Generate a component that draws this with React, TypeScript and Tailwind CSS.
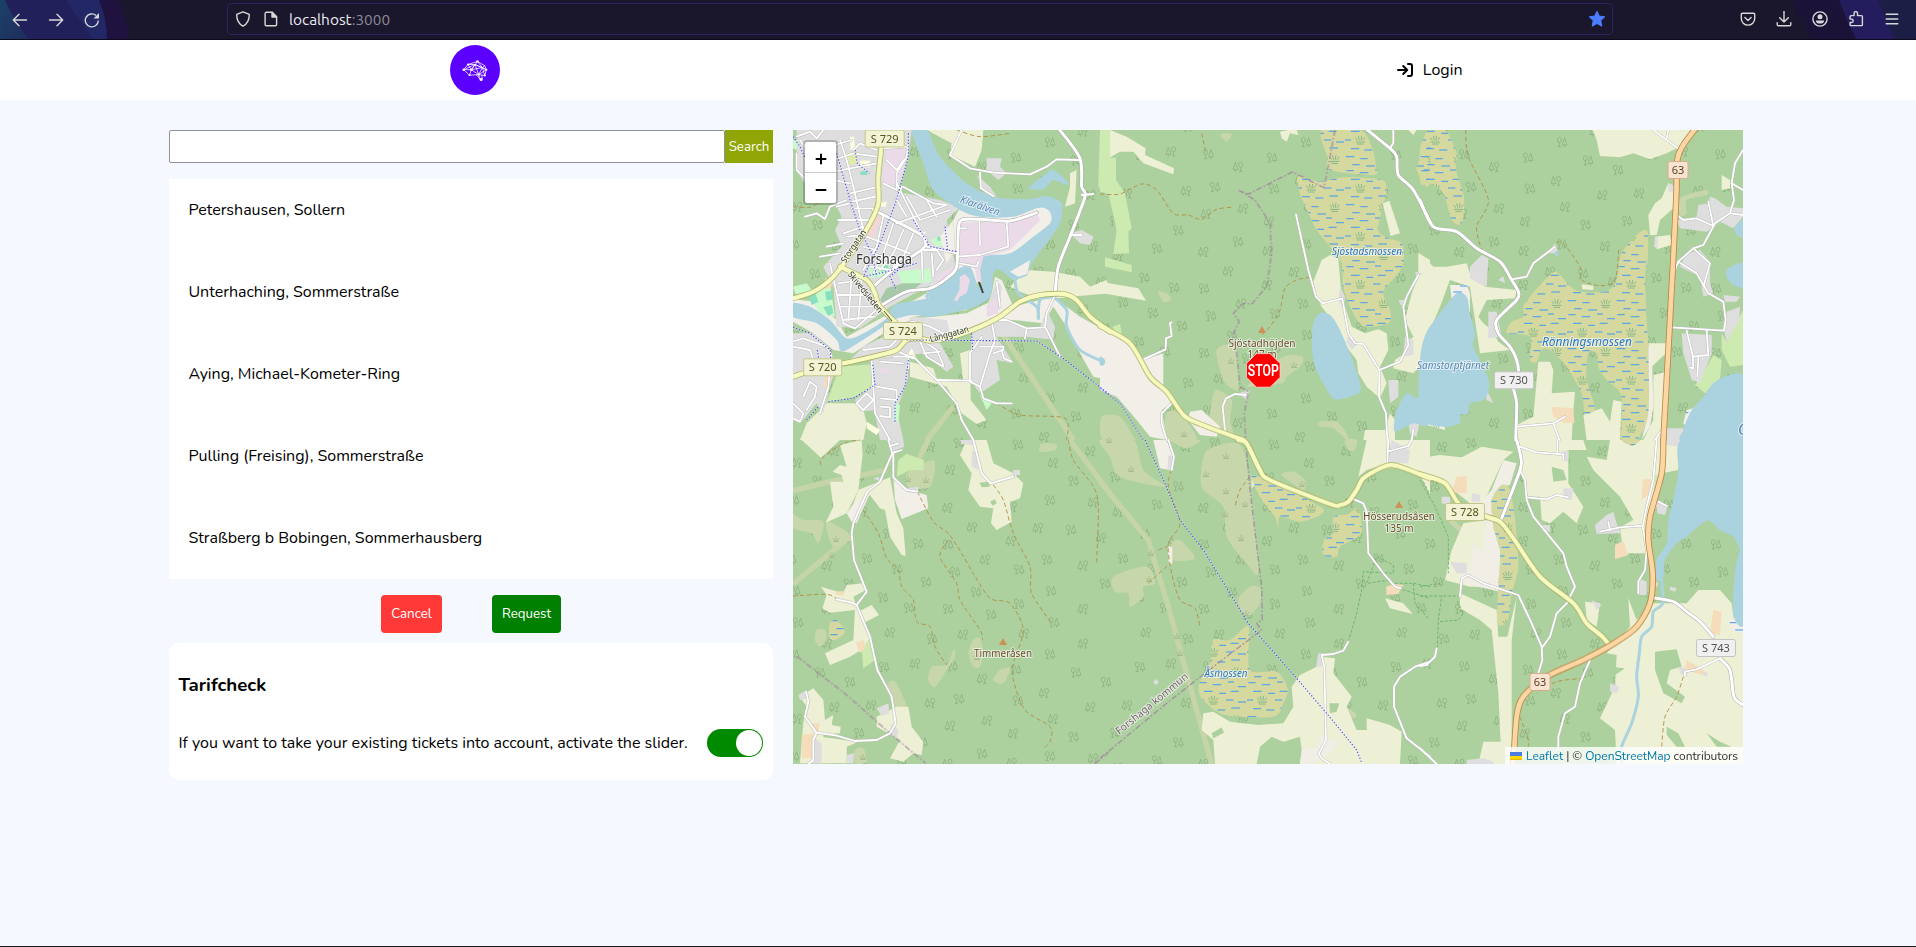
import React from "react";

type Tile = "A" | "B" | "C" | "D" | "E" | "F";

/* The map is described in six tiles, drawn at three units per pixel. */
const TILE_TRANSFORM: Record<Tile, string> = {
  A: "translate(780 120) scale(0.33333)",
  B: "translate(1100 120) scale(0.33333)",
  C: "translate(1420 120) scale(0.33333)",
  D: "translate(780 440) scale(0.33333)",
  E: "translate(1100 440) scale(0.33333)",
  F: "translate(1420 440) scale(0.33333)",
};

type Shapes = Partial<Record<Tile, string[]>>;

const BASE: Shapes = {
  A: [
    "345,600 460,590 560,580 630,545 645,470 665,480 700,560 780,540 820,530 900,590 990,640 990,780 940,770 900,700 860,620 820,560 790,610 700,600 600,620 450,650 350,650",
    "39,538 110,545 170,600 200,650 330,580 440,520 455,480 530,460 520,300 540,262 700,270 800,255 825,290 800,340 690,410 600,470 560,570 400,590 340,620 220,700 160,690 100,640 39,605",
  ],
  B: ["0,622 60,650 130,720 190,700 190,800 215,850 185,870 200,960 150,950 110,900 50,830 0,810", "270,875 305,870 360,920 350,950 300,945 265,900"],
  D: ["340,110 385,150 440,165 445,205 365,237 345,180", "200,220 250,150 270,160 230,250 215,245"],
  E: ["160,0 200,0 222,60 210,90 180,85", "455,105 470,130 455,145", "203,320 217,320 217,370 207,375"],
};

const FARMLAND: Shapes = {
  A: [
    "440,30 610,30 605,90 585,140 510,105 515,70",
    "690,500 740,450 820,455 900,470 930,500 980,480 990,520 870,530 790,540 720,515",
    "80,910 140,850 245,850 260,910 250,960 60,960",
    "390,725 460,745 470,775 550,785 540,700 570,690 572,840 620,900 590,912 545,880 500,800 390,770",
    "870,160 890,150 885,250 855,260 870,200",
    "505,790 570,785 570,840 530,850",
  ],
  B: [
    "30,30 80,50 137,85 135,105 222,145 220,163 130,130 100,95 60,95 25,115",
    "0,485 115,505 138,542 0,518",
    "540,35 565,30 590,30 595,45 570,40 560,65 545,55",
    "640,485 665,420 690,405 715,415 722,500 735,560 755,620 795,640 835,628 860,640 865,690 840,740 860,790 840,835 800,800 775,760 770,720 740,680 710,620 665,560 650,530",
    "955,400 990,420 990,640 975,680 985,710 940,760 880,745 885,720 915,700 920,670 940,650 915,600 935,520 955,470",
    "848,250 868,242 900,340 872,348",
    "790,960 795,930 855,930 870,880 885,900 885,960",
    "925,30 950,30 940,45",
  ],
  C: [
    "518,30 825,30 780,80 740,100 690,118 640,100 600,112 540,108 530,60",
    "745,190 765,200 765,260 720,300 710,345 690,345 685,285 705,250 725,235",
    "705,350 750,345 755,375 710,388",
    "905,165 930,180 930,205 905,210",
    "0,400 40,440 80,440 140,430 150,460 195,500 290,510 285,535 200,540 175,590 190,610 215,630 235,665 270,690 180,700 165,600 150,500 90,480 60,560 30,630 0,650",
    "355,725 390,725 400,750 395,820 465,815 460,870 455,960 290,960 290,915 340,890",
    "490,885 545,865 570,905 580,840 605,845 600,960 500,960",
    "685,670 740,670 738,700 695,740 690,800",
    "700,765 740,755 730,960 670,960 700,900",
    "485,493 520,497 520,510 487,508",
  ],
  D: [
    "65,0 180,0 123,53",
    "180,15 245,0 248,45 235,150 200,220 137,248 160,200 150,125 190,125 185,105 158,95 180,75 200,80",
    "235,150 330,112 350,220 370,265 377,348 365,345 330,290 315,210 300,205 270,165 220,190",
    "540,45 560,0 620,0 640,70 700,100 730,130 720,175 690,185 695,245 650,270 633,250 640,205 600,200 565,150 575,100",
    "123,440 190,460 200,435 250,430 258,450 220,470 235,515 275,495 297,525 250,550 275,590 260,620 210,650 150,675 135,640 220,600 225,510 150,518 127,505 140,465",
    "60,770 100,745 130,780 135,840 160,825 155,855 182,860 180,880 130,885 130,970 60,970 70,850 80,800",
    "290,830 350,800 385,800 395,860 430,905 425,945 400,940 370,965 330,955 360,900 290,860",
    "120,890 235,905 200,920 200,970 120,970",
  ],
  E: [
    "775,110 800,0 865,0 865,70 800,90",
    "865,0 990,0 990,105 880,72",
    "600,705 650,680 660,650 705,655 700,700 755,770 740,800 770,870 800,870 800,835 870,855 905,875 900,972 345,972 340,900 305,870 310,820 340,815 390,845 475,855 550,850 580,800 575,740",
    "855,475 910,490 938,522 870,505",
    "965,115 990,120 990,165",
  ],
  F: [
    "0,55 60,45 150,55 150,110 70,130 0,95",
    "185,20 280,35 250,60 190,190 150,190 75,130 110,60",
    "295,0 490,0 500,30 445,30 445,130 490,200 470,250 430,215 390,250 365,240 360,170 320,170 300,60",
    "500,50 560,60 570,0 785,0 775,90 725,100 710,200 690,230 680,340 610,340 600,262 640,240 600,170 520,90",
    "95,330 130,250 200,240 240,330 230,440 150,440 75,420",
    "120,460 230,510 235,590 262,590 290,470 275,600 275,972 245,972 235,760 215,570 180,540 120,505",
    "190,905 250,905 250,972 175,972",
    "625,475 650,540 700,490 800,490 835,450 900,450 935,490 940,530 969,560 969,972 590,972 585,870 540,835 585,740 590,645 560,640 630,560",
    "495,485 540,490 530,560 500,540",
  ],
};

const FOREST_ISLANDS: Shapes = {
  D: ["630,185 645,178 650,190 638,197", "598,128 625,125 630,140 605,142"],
  E: [
    "470,972 480,920 515,890 550,905 600,890 605,930 600,972",
    "688,790 718,790 710,815 690,820",
    "335,880 365,862 372,878 340,895",
  ],
  F: [
    "705,635 770,628 785,680 750,690 740,730 795,770 785,790 730,760 705,690",
    "740,860 775,880 795,920 770,920 740,885",
    "860,880 900,905 935,920 890,920",
    "585,682 615,685 600,695 585,705",
    "395,80 430,90 440,120 400,125",
  ],
};

const URBAN_BASE: Shapes = {
  E: ["660,885 720,910 690,940 640,972 600,972 605,930 655,920"],
  F: [
    "250,60 290,70 270,135 240,140 215,180 220,260 240,330 240,455 130,430 115,400 150,390 160,310 190,330 200,240 180,190 215,150",
  ],
  C: ["685,680 695,680 700,860 690,920 665,960 680,900"],
};

const RESIDENTIAL: Shapes = {
  A: [
    "50,30 395,30 385,110 365,180 350,215 480,240 540,262 500,300 515,380 530,460 440,500 330,560 240,625 170,620 160,500 130,440 185,380 165,330 185,290 165,250 140,240 165,200 70,185 50,150",
    "350,630 400,590 500,600 510,640 480,670 520,740 500,755 430,700 280,720 200,730 250,680",
    "275,720 380,710 385,770 350,870 370,960 300,960 285,880",
    "575,640 650,590 700,605 740,630 780,620 800,570 825,620 820,660 740,650 650,650 700,730 650,720 660,780 600,820 570,780",
    "39,640 100,640 150,690 160,760 130,880 110,850 60,910 39,900",
    "620,115 665,115 660,140 680,160 655,180 620,150",
    "620,560 650,480 665,500 660,570",
    "870,340 905,330 940,350 930,375 900,370",
    "590,165 630,200 650,230 620,230",
    "225,840 280,800 285,870 240,875",
  ],
  B: ["720,500 735,530 730,570 715,540", "745,640 775,670 755,690 740,665", "895,540 920,540 910,570", "915,650 940,660 940,705 910,710", "415,820 450,810 440,840", "865,780 895,780 895,830 870,850", "925,910 960,900 950,950 930,940", "945,455 970,460 950,470"],
  C: [
    "185,405 205,415 200,500 175,490 150,475 150,440",
    "205,575 230,575 245,650 205,655",
    "380,400 405,370 415,400",
    "235,480 250,468 255,490",
    "835,255 865,250 870,230 885,235 920,260 969,265 969,290 940,325 900,305 860,335 780,325 770,300 830,290",
    "800,400 840,390 870,425 870,490 880,520 850,530 840,470 780,440",
    "785,640 875,645 875,700 840,790 815,780 790,700",
    "960,560 958,600 920,665 910,620 920,575",
    "910,525 960,530 950,545 915,545",
    "740,925 790,925 785,960 740,960",
    "745,190 760,195 760,215 745,215",
    "195,800 220,850 200,840",
    "705,350 715,350 712,385 702,380",
  ],
  D: ["325,0 370,0 372,20 340,35", "55,765 80,750 85,775 60,780", "290,805 325,790 328,820 305,828", "105,895 125,910 125,970 100,970", "335,850 355,870 350,895 330,880", "375,145 415,140 415,160 380,155", "700,90 720,90 720,105 700,108", "575,30 590,40 595,90 575,80", "200,945 222,940 220,970 200,970", "540,0 580,0 580,15 545,12", "280,115 297,110 300,125"],
  E: ["648,680 655,640 668,640 665,680", "875,0 930,30 925,70 865,70", "160,725 168,717 177,727 167,735", "205,45 220,50 215,85 202,90"],
  F: [
    "90,365 140,370 140,400 110,400",
    "525,255 560,225 580,215 590,250 602,280 530,282",
    "155,160 180,165 180,185 155,185",
    "65,170 90,170 90,195 65,190",
    "430,145 460,145 455,180 430,175",
    "655,415 680,425 680,465 655,465",
    "515,480 545,495 530,510",
    "775,680 805,685 800,710 780,700",
    "740,0 785,0 780,20 740,15",
    "710,185 745,195 735,225 712,220",
    "570,730 600,740 590,760 570,755",
    "365,255 390,255 390,275 370,275",
    "425,35 445,30 445,65 425,60",
    "750,440 770,445 765,455 750,450",
    "845,690 865,700 860,710 845,705",
    "140,960 190,955 220,965 220,972 140,972",
    "700,425 715,428 712,440 702,438",
  ],
};

const INDUSTRIAL: Shapes = {
  A: [
    "320,80 370,75 385,110 350,190 305,195",
    "540,310 600,305 690,310 770,280 782,300 690,390 610,410 600,450 605,490 590,480 585,445 540,435",
    "540,470 555,462 570,480 560,520 540,530 530,545 522,540 538,510",
    "465,470 520,440 515,465 480,490",
    "620,560 650,530 655,580 620,590",
    "300,745 325,748 325,762 300,758",
  ],
};

const PLAIN_LAND: Shapes = { A: ["590,315 650,315 650,355 590,350", "690,455 750,420 742,462 715,470", "480,350 520,300 525,390 500,430"] };

const GRASS: Shapes = {
  A: ["960,30 990,30 990,230 955,200", "140,845 180,740 275,733 282,800 220,832", "170,190 255,165 260,185 175,205", "470,505 525,462 525,490 495,515"],
  B: ["0,113 48,113 48,180 75,220 95,325 85,335 87,400 40,402 50,330 25,220 0,215", "15,412 95,435 95,457 15,440", "38,620 60,612 65,640 45,640"],
  C: ["905,640 920,665 969,570 969,735 930,740 905,690", "880,705 905,720 900,780 855,820 825,795 850,760"],
  D: ["350,110 355,60 380,42 432,60 430,90 390,90", "245,625 270,595 285,660 250,685"],
  F: ["705,105 715,105 712,160 700,180"],
};

const PARK: Shapes = {
  A: ["265,440 330,430 325,465 270,475", "350,455 450,445 455,485 370,495", "450,360 490,345 505,375 470,380", "80,520 150,490 165,590 120,580", "39,500 80,490 95,510 50,530", "600,825 635,850 620,870", "345,850 360,855 355,905 340,900", "39,60 55,60 50,90 39,85"],
};

const PITCH: Shapes = {
  A: ["85,525 105,518 115,545 95,555", "135,515 155,512 160,538 140,542", "130,562 155,555 160,580 145,588", "472,350 488,350 485,362 472,362", "300,440 325,435 325,450 305,455", "240,155 260,152 262,165 242,165"],
};

const SCHOOL: Shapes = {
  A: ["210,50 222,50 225,90 212,90", "240,122 270,122 270,142 240,142", "300,248 320,245 318,260 302,260", "260,905 300,930 290,945 260,925", "395,685 408,712 380,712", "420,335 438,335 430,350 420,345"],
};

const ALLOTMENT: Shapes = { A: ["198,100 230,92 232,130 205,138"] };

const RETAIL: Shapes = { A: ["275,290 305,290 275,360 255,355"] };

const PARK_DARK: Shapes = { A: ["320,505 370,490 425,490 400,510 315,555 300,540"] };

const SCRUB: Shapes = {
  B: ["350,690 405,680 415,800 405,810 370,780", "450,790 550,710 605,710 605,735 560,770 545,790 450,800", "345,812 395,840 390,900 400,950 350,930 330,900", "5,890 60,890 100,950 100,960 10,960", "660,905 710,905 740,940 740,960 700,925 660,920", "175,515 200,520 213,540 190,545", "362,42 395,42 380,65", "200,880 240,880 290,960 200,960"],
  C: ["780,235 855,210 860,225 800,240 800,280 780,285"],
  D: ["385,95 462,62 450,140 385,140", "39,225 70,240 130,245 115,310 95,280 39,265", "140,245 215,290 160,320", "320,740 345,725 380,800 345,805", "580,600 600,595 610,640 600,680 580,680 565,640", "640,720 660,690 690,685 670,730", "455,680 500,675 520,630 525,650 500,690 465,740 445,720", "110,570 135,570 138,600 120,620 105,600", "225,930 250,925 260,965 225,970", "785,12 828,12 825,30 780,35"],
  E: ["0,0 100,0 130,90 195,140 60,110 30,50", "315,40 370,12 420,15 445,100 475,390 440,370 380,290 370,200 305,140", "215,310 240,300 285,355 215,360", "40,410 140,380 165,430 130,440 130,470 90,500 85,460 45,455", "415,480 450,440 480,445 480,490 440,530", "545,105 580,95 615,120 610,150", "735,800 768,822 760,835 725,820", "215,0 300,0 260,25", "735,0 770,0 765,30 745,30"],
  F: ["95,235 155,290 150,300 90,250"],
};

const WETLAND: Shapes = {
  B: [
    "665,30 780,30 815,80 828,140 820,165 690,150 682,110",
    "595,168 660,185 730,172 845,180 860,215 848,260 835,330 865,355 905,370 912,420 895,460 850,515 870,570 865,610 790,618 750,560 730,500 725,430 690,380 650,330 625,280 600,220",
    "990,70 960,120 950,150 980,200 990,180",
  ],
  C: [
    "25,30 75,30 110,100 108,150 132,230 125,310 95,300 70,220 30,190 10,195 0,180 0,90",
    "395,460 420,465 470,512 560,513 590,480 605,400 660,337 683,337 683,420 675,470 680,600 685,680 685,880 650,960 605,960 605,830 560,780 535,740 530,700 505,700 500,780 525,865 495,880 485,820 440,740 390,690 365,690 350,725 330,720 330,650 262,640 275,605 310,590 315,550",
  ],
  D: ["150,550 170,540 195,575 165,600 148,590"],
  E: [
    "455,110 500,120 660,200 660,225 600,245 540,230 535,262 525,230 500,200 480,170",
    "700,232 745,222 775,205 783,280 720,320 710,350 670,345 672,300 700,280",
    "340,600 390,600 435,560 448,570 450,690 530,695 563,745 550,790 520,830 375,825 305,775 298,730 330,670",
  ],
  F: ["215,180 245,135 270,150 285,240 295,380 275,460 262,545 232,548 235,440 240,330 220,260", "610,0 660,0 635,18"],
};

const WET_WHITE: Shapes = {
  C: ["90,495 140,495 150,520 150,580 130,560 95,540", "800,870 820,865 800,920 790,910", "0,895 75,920 75,930 0,910"],
  F: ["925,530 969,550 969,580 935,570"],
};

const FARMYARD: Shapes = {
  A: ["135,770 160,770 140,805 130,800", "135,475 155,480 155,500 135,510"],
  C: ["395,860 460,865 463,910 430,908 400,890"],
  D: ["228,610 250,600 258,620 240,640", "65,885 100,880 100,955 65,955", "165,455 192,453 190,467 170,465", "95,850 120,850 115,875 95,870"],
  E: ["858,440 885,432 910,435 895,462 860,465"],
  F: ["110,110 140,108 140,160 95,158", "668,118 695,118 690,160 665,180", "585,315 610,303 625,345 585,358", "880,510 905,515 900,585 870,580", "800,660 850,690 850,705 795,690"],
};

const WATER: Shapes = {
  A: [
    "395,28 440,28 480,110 560,190 640,230 740,238 800,228 845,250 840,310 800,370 775,400 750,440 742,465 720,475 700,480 660,450 640,460 630,530 570,565 460,590 400,585 340,600 280,640 200,690 180,690 170,660 110,610 36,590 36,550 90,560 150,600 200,655 260,635 320,595 345,555 440,535 450,510 530,450 570,440 595,500 605,490 603,412 690,400 760,350 810,310 812,280 795,265 770,265 700,290 600,290 540,270 460,210 430,130",
    "750,200 800,160 820,150 862,185 860,195 820,180 800,200 780,210",
  ],
  B: [
    "660,580 690,585 715,620 750,700 780,790 775,820 705,838 670,790 645,740 636,680 640,610",
    "990,640 975,720 960,830 920,820 895,860 885,890 885,935 940,910 990,900",
    "0,710 15,720 12,735 0,735",
  ],
  C: [
    "110,520 140,530 150,580 165,640 160,680 195,750 208,800 190,840 150,850 145,880 120,885 120,910 70,920 0,890 0,720 18,640 60,580",
    "972,300 945,320 950,345 972,350",
    "972,430 925,445 920,470 940,495 972,500",
    "972,775 920,768 880,790 850,830 815,870 790,930 790,965 972,965",
    "405,395 415,395 415,405 407,410",
  ],
  F: [
    "787,-3 972,-3 972,320 940,290 900,270 860,242 800,290 770,310 735,360 730,410 710,420 710,360 740,310 745,240 760,180 775,100",
    "960,330 972,325 972,550 940,525 945,400",
  ],
};

const STREAMS: Shapes = {
  A: ["705,480 715,520 770,560 775,595", "820,530 860,570 860,620 900,690 970,725", "775,595 780,540 820,530", "750,205 830,160", "450,510 440,530"],
  F: ["725,420 728,490 700,515 695,560 665,590 658,640 650,710 655,770 635,850 605,920 605,972"],
};

const SCRUB_STRIPS: Shapes = {
  A: ["640,600 880,960", "440,960 520,860"],
  D: ["39,152 150,125 320,90", "415,60 445,0", "39,432 210,290", "870,0 990,160"],
  E: ["0,125 145,300 205,500 265,720 335,972"],
};

const TRACKS: Shapes = {
  A: ["530,30 600,50 690,40", "39,260 90,262 120,245", "650,850 720,885 855,895 860,960"],
  B: ["0,222 60,222 125,192 170,210 220,280 265,285 305,298 350,268 400,262", "305,40 318,100", "630,472 590,480 555,505 540,570 510,620 480,650", "425,800 410,820"],
  C: ["137,30 145,110 205,240 170,320 185,390", "410,368 430,370 480,440 485,480 540,497 585,480 597,380"],
  D: [
    "123,75 125,55 190,10 240,0",
    "250,210 295,280 320,355 355,390 365,440 400,480 410,545 450,560 465,620 500,675",
    "412,155 460,245 505,280 545,340 580,400 630,475 690,490 730,570 700,670 700,720 735,810 810,860 812,900 795,922",
    "505,300 480,350 530,430 540,480 600,570 608,600",
    "640,135 670,180 700,280 750,380 755,460 815,550",
    "865,0 880,60 940,140 955,200 950,370",
    "39,468 140,463 175,480",
  ],
  E: ["215,90 205,140 240,250 205,310 215,400 240,480 285,505 300,560", "145,430 210,370", "450,110 420,150 405,200", "175,330 205,318"],
  F: ["490,715 410,725 350,760", "300,830 325,900 325,920", "790,710 770,770 735,830 725,920"],
};

const FOOTPATHS: Shapes = {
  E: ["745,605 770,520 785,450 790,395 880,400 880,375 830,350 800,430 870,420", "885,430 940,430 990,440", "940,430 945,490 985,535", "895,445 990,475", "970,125 990,165"],
  F: ["0,440 60,430 75,415", "0,468 115,468", "52,625 55,540 65,468", "60,545 115,540 130,520 110,480", "0,120 45,200 85,290 85,400"],
};

const STREETS: Shapes = {
  A: [
    "545,30 510,105 570,145 640,158 750,163 800,140 830,118 895,120",
    "600,158 603,205 640,228", "825,525 800,580 795,620 840,710", "630,600 680,600 740,625 795,622",
    "635,605 645,660 630,700 600,800 610,835 650,850 695,850", "605,650 570,700 570,785 600,800",
    "600,680 670,680 670,690 640,700", "665,690 672,715 695,725", "740,625 735,655", "650,485 660,560", "75,290 110,280 135,297 150,260 200,240",
    "598,300 600,375", "680,305 685,380 600,405 530,410", "540,325 560,325", "540,430 590,440 595,425",
    "430,350 440,380 530,400", "425,390 428,480", "275,725 285,880 330,960",
    "340,710 400,710 470,780 530,850 545,900 580,960", "470,780 575,782",
    "290,800 350,810 350,840 300,835", "300,860 330,862 330,892 300,888", "230,850 260,820 280,840 250,870 230,850",
    "150,740 145,800 120,880", "70,830 90,785 110,800 105,830 80,870", "39,850 70,880 60,905 39,895", "39,680 90,690 100,720", "39,665 70,655 140,680 155,710",
    "150,430 190,610 225,625 300,560", "190,600 285,590", "180,560 285,560", "175,525 270,525",
    "175,490 245,480", "215,470 205,600", "245,480 235,600",
    "350,190 400,290 430,350", "370,200 460,250 500,255 350,310", "380,230 420,300 510,270", "440,240 470,290", "365,200 350,240 380,290",
    "310,290 290,380 250,450", "340,310 310,400 280,460", "370,330 340,400 300,450", "400,340 370,410 340,440",
    "260,350 390,400", "280,400 360,430", "250,380 290,390", "270,440 330,450", "430,390 470,390 490,420 470,450", "455,400 460,470",
    "160,120 220,100 290,110", "160,155 290,130", "180,60 200,120 220,200 250,330",
    "210,220 295,200", "215,245 295,228", "190,340 250,320", "175,300 270,300", "200,350 250,345", "215,265 280,265",
    "50,100 50,150 75,175", "50,50 90,35 110,55 130,30", "60,60 75,80", "310,190 350,210 350,160 380,110 385,70", "320,120 350,150 370,120", "310,85 380,80",
    "120,410 180,400", "140,380 190,370", "170,260 210,250", "160,180 210,190", "220,90 240,70 290,90", "165,75 215,60",
    "340,620 400,605 450,620 490,640", "420,665 440,710 490,740", "440,670 470,690 490,735", "430,700 480,695",
    "360,650 330,680 250,690", "345,690 400,715", "385,710 385,745", "870,345 905,345", "905,225 940,222", "300,725 370,730",
  ],
  B: [
    "880,30 880,70 870,85",
    "588,283 605,360 625,450 648,530 668,550 727,535 745,640 765,670 790,672 838,750 837,830 858,880 862,960",
    "838,750 900,725 925,675 910,560 920,530 955,465", "215,607 210,610 215,648 198,655 197,688 130,718",
    "438,825 405,822 378,835 368,860 375,930", "215,850 185,880 185,910 200,960", "935,960 940,930",
  ],
  C: [
    "275,478 320,470 340,430 405,380", "700,30 780,90", "745,30 740,55",
    "969,90 945,130 935,190 942,240 930,280 885,310 850,375 820,385 775,425 762,455", "935,190 969,210",
    "770,285 790,300 830,295 880,318 865,245", "930,280 969,285", "775,425 830,460 865,520 910,545 917,600 912,632 755,622",
    "820,385 870,430 850,500", "800,632 818,705 820,745 810,742", "818,710 865,705 860,632", "835,710 832,770",
    "290,920 400,910 435,890", "400,910 418,960", "722,935 705,960",
  ],
  D: [
    "325,0 337,40 300,125 262,155 220,250 215,280 222,360 260,455 230,495 270,590 292,690 335,770 347,850 330,880 290,900 225,903 170,887 110,878 75,830 85,785 78,755",
    "110,878 100,900 100,960 85,972", "340,40 340,112 380,150 412,155", "340,38 365,30", "330,18 355,10", "580,0 605,100 632,130 700,110",
    "230,495 215,488 170,478",
  ],
  E: [
    "205,0 222,50 215,90", "865,0 862,70", "862,35 925,18 935,0", "762,178 790,190 800,215 805,340 850,400 885,440 902,445",
    "745,605 730,632 700,642 665,645 673,680 678,900 657,940 665,955 690,972", "990,665 945,680 900,710 882,740 882,800 920,895 990,950",
  ],
  F: [
    "300,20 350,37 430,43 430,60", "412,0 412,40",
    "300,90 315,120 320,180 340,230 430,340 440,380 465,440 440,490 410,520 390,590 368,620", "320,172 380,178 410,165 445,172",
    "710,0 700,120 680,200 668,260 680,330 675,390 655,425 655,460", "540,275 600,262 668,257", "565,245 570,272", "690,230 680,230",
    "715,185 740,198", "900,655 830,688 795,695 795,708",
    "120,470 125,415 145,405 190,430 295,465 335,550 365,620 367,660 355,700", "512,655 480,730 465,800 435,820 415,890 415,930",
    "50,625 45,650 20,675 0,678", "0,925 50,972",
  ],
};

const COLLECTORS: Shapes = {
  A: [
    "838,28 900,115 905,200 915,230 870,350 835,440 825,525",
    "305,555 380,515 450,505 500,475 530,440 535,330 545,300 600,298 690,303 770,278",
    "280,270 340,300 430,350 430,385 350,440 280,500",
  ],
  B: ["800,28 870,85 890,110 895,165 940,210 990,305"],
  C: ["0,240 40,320 110,335 170,385 240,425 275,480 295,515 290,540 230,600 235,640 270,680 290,720 295,760 280,800 290,850 287,960"],
  F: ["290,0 302,50 300,90 243,240", "693,472 760,485 800,515 840,545 880,590", "900,655 930,690 942,770 969,795"],
};

const SECONDARY: Shapes = {
  A: [
    "39,535 100,515 160,470 220,390 270,310 295,250 295,170 310,28",
    "180,440 260,480 285,520 300,560 380,640",
    "39,770 130,740 200,728 300,705 350,690 380,660 420,655 450,662 520,650 600,620 660,590 720,545 780,525 850,522 890,540 930,590 990,635",
  ],
  B: ["0,618 90,670 150,770 200,815 250,885 300,912 430,960"],
  E: ["415,0 440,10 480,90 510,120 690,192 720,195 745,185 770,150 790,115 840,85 870,75 900,80 990,115"],
  F: ["0,103 75,130 120,195 200,230 240,245 280,295 360,410 460,490 500,550 545,588 568,615"],
};

const PRIMARY: Shapes = {
  C: ["825,28 790,75 772,120 768,250 750,600 730,962"],
  F: ["730,0 725,100 690,230 685,300 698,400 690,490 650,560 590,605 500,655 380,710 310,770 290,830 280,975"],
};

const CYCLE: Shapes = {
  A: [
    "380,660 770,663 850,715 990,825", "39,622 90,640 150,690 155,740", "170,100 210,240 240,330 275,400 290,470",
    "385,40 385,110 350,240 300,370 250,470", "400,300 450,380 530,395", "495,320 503,390", "145,845 220,835 285,795 278,730",
    "385,720 375,800 345,850 345,910", "575,640 578,690", "250,470 320,455 410,430", "225,90 232,130 268,160", "39,50 60,80 95,160",
    "390,420 330,470 350,510", "112,690 118,730", "80,900 115,860",
  ],
  B: ["0,805 60,850 130,960"],
  E: ["135,0 195,130 240,240 310,330 445,550 590,715 680,820 770,930 785,968"],
};

const BOUNDARY: Shapes = {
  B: ["705,30 690,110 672,203 577,156 445,222 418,212 465,240 510,310 515,400 500,500 455,552 430,550 400,580 418,605 400,640 410,700 420,800 445,815 433,880 437,960"],
  D: ["52,650 200,765 330,880 437,970", "945,970 988,935"],
  E: ["437,0 450,150 485,440 487,540 470,550 485,570 340,680 200,790 0,955"],
};

const entries = (s: Shapes) => Object.entries(s) as [Tile, string[]][];

/* Turns a list of points into a curve that passes through each of them. */
function curve(points: string, closed: boolean): string {
  const p = points.trim().split(/\s+/).map((s) => s.split(",").map(Number));
  const n = p.length;
  const at = (i: number) => (closed ? p[(i + n) % n] : p[Math.max(0, Math.min(n - 1, i))]);
  const t = 0.14;
  let d = `M${p[0][0]} ${p[0][1]}`;
  for (let i = 0; i < (closed ? n : n - 1); i++) {
    const [a, b, c, e] = [at(i - 1), at(i), at(i + 1), at(i + 2)];
    const x1 = b[0] + (c[0] - a[0]) * t;
    const y1 = b[1] + (c[1] - a[1]) * t;
    const x2 = c[0] - (e[0] - b[0]) * t;
    const y2 = c[1] - (e[1] - b[1]) * t;
    d += `C${x1.toFixed(1)} ${y1.toFixed(1)} ${x2.toFixed(1)} ${y2.toFixed(1)} ${c[0]} ${c[1]}`;
  }
  return closed ? d + "Z" : d;
}

function Areas({ shapes, fill, smooth }: { shapes: Shapes; fill: string; smooth?: boolean }) {
  return (
    <g fill={fill} stroke="none">
      {entries(shapes).map(([tile, list]) => (
        <g key={tile} transform={TILE_TRANSFORM[tile]}>
          {list.map((points, i) => (smooth ? <path key={i} d={curve(points, true)} /> : <polygon key={i} points={points} />))}
        </g>
      ))}
    </g>
  );
}

function Lines({ shapes, color, width, dash, cap = "round", smooth, opacity }: { shapes: Shapes; color: string; width: number; dash?: string; cap?: "round" | "butt"; smooth?: boolean; opacity?: number }) {
  return (
    <g fill="none" stroke={color} strokeWidth={width} strokeDasharray={dash} strokeLinecap={cap} strokeLinejoin="round" opacity={opacity}>
      {entries(shapes).map(([tile, list]) => (
        <g key={tile} transform={TILE_TRANSFORM[tile]}>
          {list.map((points, i) => (smooth ? <path key={i} d={curve(points, false)} /> : <polyline key={i} points={points} />))}
        </g>
      ))}
    </g>
  );
}

/* Forest symbols: 1 puts the round tree on the left, 0 puts the conifer there. */
const TREES: [number, number, 0 | 1][] = [
  [163, 33, 0], [273, 27, 0], [450, 20, 0], [714, 13, 1], [51, 68, 0], [510, 89, 0], [113, 122, 1], [621, 73, 0], [237, 110, 1], [699, 112, 0],
  [42, 180, 1], [171, 187, 0], [502, 203, 0], [695, 200, 0], [606, 172, 1], [576, 261, 0], [6, 263, 0], [105, 269, 1], [195, 293, 0], [693, 302, 0],
  [414, 310, 1], [504, 313, 1], [261, 355, 1], [615, 358, 0], [33, 358, 1], [351, 386, 1], [525, 395, 1], [717, 388, 1], [141, 376, 0], [438, 425, 1],
  [207, 430, 1], [588, 455, 1], [45, 452, 1], [309, 472, 1], [387, 503, 1], [504, 506, 1], [717, 491, 1], [141, 506, 0], [633, 523, 1], [54, 547, 1],
  [330, 577, 0], [549, 583, 0], [732, 580, 0], [456, 596, 1], [141, 610, 0], [42, 642, 1], [405, 670, 0], [517, 678, 1], [312, 680, 1], [708, 688, 1],
  [120, 697, 1], [606, 716, 0], [210, 725, 1], [24, 758, 0], [537, 8, 1], [427, 138, 1], [363, 193, 1], [325, 280, 1], [246, 215, 0],
];

const WRAP = [-768, 0, 768];

/* Water dashes of the marsh symbol: x, y and length. */
const DASHES = [
  [4, 8, 22], [44, 14, 26], [90, 6, 18], [120, 20, 24], [18, 34, 26], [64, 40, 20], [98, 34, 24], [0, 60, 18], [84, 60, 22], [120, 66, 24],
  [18, 86, 24], [58, 90, 24], [100, 84, 26], [2, 110, 26], [46, 116, 22], [22, 134, 22], [64, 138, 26],
];

function Patterns() {
  return (
    <defs>
      <pattern id="trees" patternUnits="userSpaceOnUse" x="780" y="440" width="256" height="256">
        <g transform="scale(0.33333)" fill="none" stroke="#8bb07d" strokeWidth="2.4">
          {WRAP.map((dx) =>
            WRAP.map((dy) =>
              TREES.filter(([x, y]) => x + dx > -20 && x + dx < 790 && y + dy > -20 && y + dy < 790).map(([x, y, kind]) => (
                <g key={`${x}-${y}-${dx}-${dy}`} transform={`translate(${x + dx} ${y + dy})${kind ? "" : " scale(-1 1)"}`}>
                  <ellipse cx="-8" cy="-6" rx="6" ry="7.5" />
                  <path d="M-8 1V14M-13 14H-3M8 -13L0 9H15ZM8 9V16" />
                </g>
              )),
            ),
          )}
        </g>
      </pattern>
      <pattern id="marsh" patternUnits="userSpaceOnUse" width="147" height="144">
        <g fill="none">
          <g stroke="#4a9fec" strokeWidth="3.3">
            {DASHES.map(([x, y, w]) => (
              <path key={`${x}-${y}`} d={`M${x} ${y}h${w}`} />
            ))}
          </g>
          <g stroke="#7cb588" strokeWidth="2.8">
            <path d="M32 66h28M37 61l-6 -8M43 61l-3 -13M48 61l2 -13M53 61l7 -9M36 72h20" />
            <path d="M102 124h28M107 119l-6 -8M113 119l-3 -13M118 119l2 -13M123 119l7 -9M106 130h20" />
          </g>
        </g>
      </pattern>
    </defs>
  );
}

function Shield({ x, y, w, text, fill, stroke, color }: { x: number; y: number; w: number; text: string; fill: string; stroke: string; color: string }) {
  return (
    <g>
      <rect x={x - w / 2} y={y - 8.5} width={w} height="17" rx="1.8" fill={fill} stroke={stroke} />
      <text x={x} y={y + 4} fontSize="11" fill={color} textAnchor="middle">
        {text}
      </text>
    </g>
  );
}

function Label({ x, y, text, size = 10.4, color = "#704b2c", width, italic, rotate }: { x: number; y: number; text: string; size?: number; color?: string; width?: number; italic?: boolean; rotate?: number }) {
  return (
    <text
      transform={`translate(${x} ${y}) rotate(${rotate ?? 0})`}
      fontSize={size}
      fill={color}
      stroke="#ffffff"
      strokeOpacity="0.6"
      strokeWidth="2"
      paintOrder="stroke"
      textAnchor="middle"
      fontStyle={italic ? "italic" : "normal"}
      textLength={width}
      lengthAdjust="spacingAndGlyphs"
    >
      {text}
    </text>
  );
}

const SCRUB_MARKS = [
  [1231, 361], [1294, 365], [1184, 434], [1226, 456], [1206, 474], [1226, 491], [1225, 514], [1245, 504], [1241, 538], [1131, 469], [1109, 440], [1151, 553], [1149, 579], [1177, 636], [1180, 653], [1246, 613], [1302, 484], [908, 479], [926, 480], [836, 539], [832, 555], [977, 657], [863, 757],
];

function MapDrawing() {
  const sec = { fill: "#f2f3d4", stroke: "#c3c687", color: "#56541e" };
  const prim = { fill: "#f7e4d2", stroke: "#dba98c", color: "#5d3f19" };
  const tert = { fill: "#f0f0f0", stroke: "#c4c4c4", color: "#555555" };
  return (
    <svg className="block h-full w-full" viewBox="793 130 950 634" fontFamily="'Noto Sans','Open Sans',sans-serif">
      <Patterns />
      <rect x="793" y="130" width="950" height="634" fill="#add19e" />
      <rect x="793" y="130" width="950" height="634" fill="url(#trees)" />
      <Lines shapes={SCRUB_STRIPS} color="#c5d5a8" width={16} cap="butt" />
      <Areas shapes={SCRUB} fill="#c8d7ab" smooth />
      <Areas shapes={BASE} fill="#f2eee8" />
      <Areas shapes={FARMLAND} fill="#eef0d5" />
      <Areas shapes={FOREST_ISLANDS} fill="#add19e" />
      <Areas shapes={URBAN_BASE} fill="#f1eee6" />
      <Areas shapes={GRASS} fill="#cdebb0" />
      <Areas shapes={RESIDENTIAL} fill="#dfdede" />
      <Areas shapes={PARK} fill="#c8facc" />
      <Areas shapes={PARK_DARK} fill="#a6c9a8" />
      <Areas shapes={ALLOTMENT} fill="#e0ecae" />
      <Areas shapes={PITCH} fill="#88e0be" />
      <Areas shapes={SCHOOL} fill="#ffffe0" />
      <Areas shapes={RETAIL} fill="#f4d6d4" />
      <Areas shapes={FARMYARD} fill="#f5dcba" />
      <Areas shapes={WETLAND} fill="#d6d99f" smooth />
      <Areas shapes={WETLAND} fill="url(#marsh)" smooth />
      <Areas shapes={WET_WHITE} fill="#f2efe9" />
      <Areas shapes={WET_WHITE} fill="url(#marsh)" />
      <Areas shapes={WATER} fill="#aad3df" smooth />
      <Lines shapes={STREAMS} color="#aad3df" width={9} smooth />
      <Areas shapes={PLAIN_LAND} fill="#f2efe9" />
      <Areas shapes={INDUSTRIAL} fill="#ebdbe8" />
      <g fill="none" stroke="#a4b98c" strokeWidth="0.9">
        {SCRUB_MARKS.map(([x, y]) => (
          <path key={`${x}-${y}`} d={`M${x - 3} ${y + 2.5}h6M${x} ${y + 2}v-5M${x - 1} ${y + 2}l-2 -3M${x + 1} ${y + 2}l2 -3`} />
        ))}
      </g>
      <Lines shapes={TRACKS} color="#b08f45" width={2.8} dash="13 8" cap="butt" smooth />
      <Lines shapes={FOOTPATHS} color="#6bb36b" width={2.8} dash="9 5" cap="butt" />
      <Lines shapes={BOUNDARY} color="#a088a0" width={4.2} dash="18 6 5 6" cap="butt" opacity={0.85} />
      <Lines shapes={STREETS} color="#b9b9b9" width={8} />
      <Lines shapes={COLLECTORS} color="#a9a9a9" width={12} smooth />
      <Lines shapes={STREETS} color="#ffffff" width={5.4} />
      <Lines shapes={COLLECTORS} color="#ffffff" width={9} smooth />
      <Lines shapes={SECONDARY} color="#a2a65c" width={17} smooth />
      <Lines shapes={SECONDARY} color="#f7fabf" width={13} smooth />
      <Lines shapes={PRIMARY} color="#b98840" width={19} smooth />
      <Lines shapes={PRIMARY} color="#fcd6a4" width={14} smooth />
      <Lines shapes={CYCLE} color="#ffffff" width={4} opacity={0.35} />
      <Lines shapes={CYCLE} color="#4444f4" width={3.2} dash="4 5.5" cap="butt" />
      <path d="M979 282L983 293" stroke="#444444" strokeWidth="2" />
      <path d="M884 311L892 321" stroke="#444444" strokeWidth="1" />

      {[[1262, 330], [1399, 505], [1003, 642]].map(([x, y]) => (
        <path key={x} d={`M${x} ${y - 4}l4 7h-8Z`} fill="#d08f55" />
      ))}

      <Label x={884} y={264} text="Forshaga" size={13.5} color="#333333" width={56} />
      <Label x={856} y={248} text="Storgatan" size={9} color="#35351f" width={38} rotate={-56} />
      <Label x={863} y={294} text="Skivedsleden" size={9} color="#35351f" width={50} rotate={51} />
      <Label x={950} y={337} text="Långgatan" size={9} color="#35351f" width={40} rotate={-15} />
      <Label x={979} y={209} text="Klarälven" color="#5b86b4" width={41} italic rotate={19} />
      <Label x={1262} y={346.5} text="Sjöstadhöjden" width={67} />
      <Label x={1262} y={358} text="147 m" width={29} />
      <Label x={1003} y={656.5} text="Timmeråsen" width={58} />
      <Label x={1399} y={519.5} text="Hösserudsåsen" width={72} />
      <Label x={1399} y={531.5} text="135 m" width={29} />
      <Label x={1367} y={254.5} text="Sjöstadsmossen" color="#2b76c4" width={70} italic />
      <Label x={1453} y={368.5} text="Samstorptjärnet" color="#5b86b4" width={72} italic />
      <Label x={1587} y={346} text="Rönningsmossen" size={12} color="#2b76c4" width={90} italic />
      <Label x={1226} y={676.5} text="Åsmossen" color="#2b76c4" width={43} italic />
      <Label x={1154} y={706.5} text="Forshaga kommun" size={10.5} color="#7d6079" width={90} rotate={-39.5} />
      <Label x={1743.5} y={434.5} text="G" size={17} color="#5b86b4" italic />

      <Shield x={884.7} y={138.5} w={39} text="S 729" {...sec} />
      <Shield x={903} y={331} w={39} text="S 724" {...sec} />
      <Shield x={822.7} y={367.3} w={38} text="S 720" {...sec} />
      <Shield x={1465} y={512} w={39} text="S 728" {...sec} />
      <Shield x={1514} y={380.3} w={39} text="S 730" {...tert} />
      <Shield x={1716} y={648} w={39} text="S 743" {...tert} />
      <Shield x={1678} y={170} w={20} text="63" {...prim} />
      <Shield x={1540} y={682} w={20} text="63" {...prim} />

      <path d="M1256.4 353.6h13.8l9.9 9.9v13.8l-9.9 9.9h-13.8l-9.9 -9.9v-13.8Z" fill="#ff0000" stroke="#ffdede" strokeWidth="0.8" />
      <text x="1263.3" y="376.2" fontSize="16" fontWeight="600" fill="#ffffff" textAnchor="middle" textLength="31" lengthAdjust="spacingAndGlyphs" fontFamily="Roboto,sans-serif">
        STOP
      </text>
    </svg>
  );
}

function MapPanel() {
  return (
    <section className="relative h-[634px] w-[950px] overflow-hidden">
      <MapDrawing />
      <div className="absolute top-[10px] left-[10px] flex w-[35px] flex-col rounded-[4px] border-2 border-black/20 bg-white bg-clip-padding">
        <button className="flex h-[31px] items-center justify-center border-b border-[#cccccc] pt-[3px]" aria-label="Zoom in">
          <svg className="h-3 w-3" viewBox="0 0 12 12"><path d="M.7 6H11.3M6 .7V11.3" stroke="#000" strokeWidth="2" /></svg>
        </button>
        <button className="flex h-[30px] items-center justify-center pt-[3px]" aria-label="Zoom out">
          <svg className="h-3 w-3" viewBox="0 0 12 12"><path d="M.7 6H11.3" stroke="#000" strokeWidth="2" /></svg>
        </button>
      </div>
      <div className="absolute right-0 bottom-0 flex h-[17px] w-[238px] items-center gap-1 bg-white/80 px-[5px] text-[12px] whitespace-pre text-[#333333]">
        <svg className="h-2 w-3 shrink-0" viewBox="0 0 12 8"><path fill="#4c7be1" d="M0 0h12v4H0z" /><path fill="#ffd500" d="M0 4h12v3H0z" /><path fill="#e0bc00" d="M0 7h12v1H0z" /></svg>
        <span className="tracking-[-0.03px]"><span className="text-[#0078a8]">Leaflet</span> | © <span className="text-[#0078a8]">OpenStreetMap</span> contributors</span>
      </div>
    </section>
  );
}

function BrowserBar() {
  const icon = "h-4 w-4 shrink-0";
  return (
    <div className="relative flex h-10 w-full items-center overflow-hidden border-b border-[#0c0a1c] bg-[#1a172c] text-[#d8d8d8]">
      <svg className="absolute inset-0 h-full w-full" viewBox="0 0 1916 40" preserveAspectRatio="none">
        <defs>
          <linearGradient id="teal" x1="0" y1="0" x2="1" y2="1"><stop offset="0" stopColor="#1c4169" /><stop offset="1" stopColor="#1d2c5c" /></linearGradient>
        </defs>
        <path d="M0 0H117Q127 18 129 40H0Z" fill="#20123f" />
        <path d="M0 0H99Q107 20 107 40H0Z" fill="#222765" />
        <path d="M0 0H66L93 40H0Z" fill="#21205a" />
        <path d="M0 0H5Q14 22 29 40H0Z" fill="url(#teal)" />
        <path d="M1792 0H1916V40H1812Q1800 20 1792 0Z" fill="#1b1238" />
        <path d="M1839 0H1916V40H1856Q1846 20 1839 0Z" fill="#231d5e" />
        <path d="M1878 0H1916V40H1894Z" fill="#1d1e46" />
      </svg>
      <div className="relative flex w-[227px] shrink-0 items-center gap-5 pl-3">
        <svg className={icon} viewBox="0 0 16 16" fill="none" stroke="currentColor" strokeWidth="1.4" strokeLinecap="round" strokeLinejoin="round"><path d="M14.5 8H1.5M7 2.2L1.3 8L7 13.8" /></svg>
        <svg className={icon} viewBox="0 0 16 16" fill="none" stroke="currentColor" strokeWidth="1.4" strokeLinecap="round" strokeLinejoin="round"><path d="M1.5 8H14.5M9 2.2L14.7 8L9 13.8" /></svg>
        <svg className={icon} viewBox="0 0 16 16" fill="none" stroke="currentColor" strokeWidth="1.4"><path d="M14.3 8.5A6.5 6.5 0 1 1 12 3.4" /><path d="M15 1V6.5H9.5Z" fill="currentColor" stroke="none" /></svg>
      </div>
      <div className="relative -mt-[2px] flex h-8 w-[1386px] shrink-0 items-center rounded-[4px] border border-[#28245f] bg-[#1a172c] pr-[6px] pl-[7px]">
        <svg className={icon} viewBox="0 0 16 16" fill="none" stroke="currentColor" strokeWidth="1.4" strokeLinejoin="round"><path d="M8 .9L14.3 3.4C14.3 9 12.2 12.8 8 15.2C3.8 12.8 1.7 9 1.7 3.4Z" /></svg>
        <svg className="ml-3 h-4 w-4 shrink-0" viewBox="0 0 16 16" fill="none" stroke="currentColor" strokeWidth="1.4" strokeLinejoin="round"><path d="M3.4 1.3H9.2L13.6 5.7V13.4A1.3 1.3 0 0 1 12.3 14.7H3.4A1.3 1.3 0 0 1 2.1 13.4V2.6A1.3 1.3 0 0 1 3.4 1.3Z" /><path d="M9 1.3V6H13.6Z" fill="currentColor" /></svg>
        <span className="mt-[2px] ml-[10px] font-['Ubuntu','Noto_Sans',sans-serif] text-[15.4px] text-[#ececf0]">localhost<span className="text-[#8b8996]">:3000</span></span>
        <svg className="ml-auto h-[18px] w-[18px]" viewBox="0 0 18 18"><path d="M9 1.2L11.3 6.1L16.8 6.8L12.8 10.6L13.8 16.2L9 13.5L4.2 16.2L5.2 10.6L1.2 6.8L6.7 6.1Z" fill="#4a7dff" stroke="#4a7dff" strokeLinejoin="round" /></svg>
      </div>
      <div className="relative -mt-px ml-auto flex items-center gap-5 pr-4">
        <svg className={icon} viewBox="0 0 16 16" fill="none" stroke="currentColor" strokeWidth="1.4" strokeLinecap="round" strokeLinejoin="round"><path d="M2.5 2.2H13.5A1.2 1.2 0 0 1 14.7 3.4V7.4A6.7 6.7 0 0 1 1.3 7.4V3.4A1.2 1.2 0 0 1 2.5 2.2ZM4.9 6.6L8 9.5L11.1 6.6" /></svg>
        <svg className={icon} viewBox="0 0 16 16" fill="none" stroke="currentColor" strokeWidth="1.4" strokeLinecap="round" strokeLinejoin="round"><path d="M8 .2V10.7M3.7 6.7L8 11L12.3 6.7M1.2 11.8V13.4A1.4 1.4 0 0 0 2.6 14.8H13.4A1.4 1.4 0 0 0 14.8 13.4V11.8" /></svg>
        <svg className={icon} viewBox="0 0 16 16" fill="none" stroke="currentColor" strokeWidth="1.4"><circle cx="8" cy="8" r="7.1" /><circle cx="8" cy="5.8" r="2.5" fill="currentColor" stroke="none" /><path d="M3.8 9.4H12.2Q11.8 12.6 8 12.6T3.8 9.4Z" fill="currentColor" stroke="none" /></svg>
        <svg className={icon} viewBox="0 0 16 16" fill="none" stroke="currentColor" strokeWidth="1.4" strokeLinejoin="round"><path d="M3 5.2H6.1V2.9A1.7 1.7 0 0 1 9.5 2.9V5.2H13.5A.9.9 0 0 1 14.4 6.1V14.3A.9.9 0 0 1 13.5 15.2H3A.9.9 0 0 1 2.1 14.3V12.1H3.5A1.7 1.7 0 0 0 3.5 8.7H2.1V6.1A.9.9 0 0 1 3 5.2Z" transform="translate(0 -.6)" /></svg>
        <svg className={icon} viewBox="0 0 16 16" fill="none" stroke="currentColor" strokeWidth="1.4" strokeLinecap="round"><path d="M2.2 3.2H13.8M2.2 8H13.8M2.2 12.8H13.8" /></svg>
      </div>
    </div>
  );
}

function BrainLogo() {
  return (
    <div className="flex h-[50px] w-[50px] items-center justify-center rounded-full bg-[#5b00ff]">
      <svg className="h-[22px] w-[26px]" viewBox="0 0 84 72" fill="none" stroke="#ffffff" strokeWidth="2.5" strokeLinejoin="round">
        <path d="M5 35L19 18L50 8L74 22L79 35L74 54L54 51L24 53ZM5 35H30L50 8M19 18L42 18L79 35M19 18L30 35L24 53M30 35L54 51L42 18L5 35M42 18L66 28L74 22M66 28L79 35M66 28L54 51L79 35M50 8L66 28M30 35L42 18M30 35L66 28M54 51L60 68L66 66L64 52M46 51L60 68M66 28L74 54" />
        <g fill="#ffffff" stroke="none"><circle cx="5" cy="35" r="4" /><circle cx="19" cy="18" r="3.5" /><circle cx="50" cy="8" r="4" /><circle cx="79" cy="35" r="3.5" /><circle cx="30" cy="35" r="4" /><circle cx="24" cy="53" r="3" /><circle cx="74" cy="54" r="3.5" /><circle cx="62" cy="67" r="5" /><circle cx="54" cy="51" r="3.5" /></g>
      </svg>
    </div>
  );
}

const STOPS = ["Petershausen, Sollern", "Unterhaching, Sommerstraße", "Aying, Michael-Kometer-Ring", "Pulling (Freising), Sommerstraße", "Straßberg b Bobingen, Sommerhausberg"];

export default function App() {
  return (
    <div className="flex h-[947px] w-[1916px] flex-col overflow-hidden border-b border-[#1a1a1a] bg-[#f5f9ff] font-['Nunito','Noto_Sans',sans-serif] text-[16px] leading-6 text-black">
      <BrowserBar />
      <header className="flex h-[60px] shrink-0 items-center justify-between bg-white pr-[453.5px] pl-[450px]">
        <BrainLogo />
        <a className="flex items-center gap-[10px]">
          <svg className="h-4 w-4" viewBox="0 0 16 16" fill="none" stroke="#000" strokeWidth="2" strokeLinecap="round" strokeLinejoin="round"><path d="M1 8H9.5M6.2 4L10.2 8L6.2 12M11 2H13A2 2 0 0 1 15 4V12A2 2 0 0 1 13 14H11" /></svg>
          <span>Login</span>
        </a>
      </header>
      <main className="flex gap-5 pt-[30px] pl-[169px]">
        <div className="flex w-[604px] flex-col">
          <div className="flex h-[33px]">
            <input className="min-w-0 flex-1 rounded-[2px] border border-[#8f8f9d] bg-white" aria-label="Stop" />
            <button className="w-12 bg-[#8fa606] text-[13.3px] text-white">Search</button>
          </div>
          <ul className="mt-4 flex h-[400px] flex-col bg-white px-[19.4px] pt-[19px]">
            {STOPS.map((stop) => (
              <li key={stop} className="h-[82px] shrink-0">
                <span>{stop}</span>
              </li>
            ))}
          </ul>
          <div className="mt-4 flex justify-center gap-[50px]">
            <button className="h-[38px] w-[61px] rounded-[4px] bg-[#ff3838] text-[13.3px] text-white">Cancel</button>
            <button className="h-[38px] w-[69px] rounded-[4px] bg-[#008000] text-[13.3px] text-white">Request</button>
          </div>
          <section className="mt-[10px] h-[137px] rounded-[10px] bg-white pt-[30px] pr-[10px] pl-[9.4px]">
            <h3 className="text-[18.72px] leading-6 font-bold">Tarifcheck</h3>
            <div className="mt-[32px] flex items-center justify-between">
              <span className="whitespace-nowrap">If you want to take your existing tickets into account, activate the slider.</span>
              <span className="flex h-7 w-14 items-center justify-end rounded-full bg-[#008a00] pr-px">
                <span className="h-[26px] w-[26px] rounded-full bg-white" />
              </span>
            </div>
          </section>
        </div>
        <MapPanel />
      </main>
    </div>
  );
}
